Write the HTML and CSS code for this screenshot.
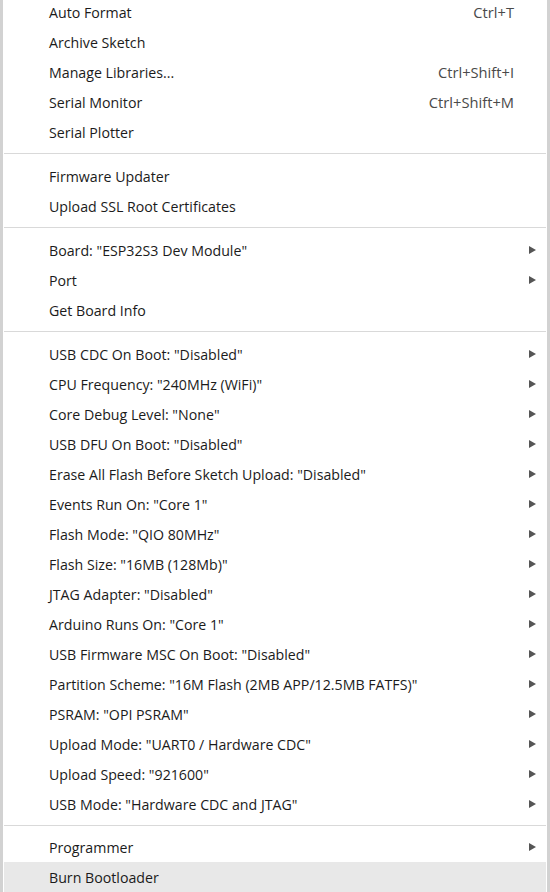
FILE: index.html
```html
<!DOCTYPE html>
<html>
<head>
<meta charset="utf-8">
<link rel="stylesheet" href="styles.css">
</head>
<body>
<div class="menu">
  <div class="item"><span class="label">Auto Format</span><span class="key">Ctrl+T</span><span class="sub"></span></div>
  <div class="item"><span class="label">Archive Sketch</span><span class="sub"></span></div>
  <div class="item"><span class="label">Manage Libraries...</span><span class="key">Ctrl+Shift+I</span><span class="sub"></span></div>
  <div class="item"><span class="label">Serial Monitor</span><span class="key">Ctrl+Shift+M</span><span class="sub"></span></div>
  <div class="item"><span class="label">Serial Plotter</span><span class="sub"></span></div>
  <div class="sep"></div>
  <div class="item"><span class="label">Firmware Updater</span><span class="sub"></span></div>
  <div class="item"><span class="label">Upload SSL Root Certificates</span><span class="sub"></span></div>
  <div class="sep"></div>
  <div class="item"><span class="label">Board: "ESP32S3 Dev Module"</span><span class="sub"><i class="arrow"></i></span></div>
  <div class="item"><span class="label">Port</span><span class="sub"><i class="arrow"></i></span></div>
  <div class="item"><span class="label">Get Board Info</span><span class="sub"></span></div>
  <div class="sep"></div>
  <div class="item"><span class="label">USB CDC On Boot: "Disabled"</span><span class="sub"><i class="arrow"></i></span></div>
  <div class="item"><span class="label">CPU Frequency: "240MHz (WiFi)"</span><span class="sub"><i class="arrow"></i></span></div>
  <div class="item"><span class="label">Core Debug Level: "None"</span><span class="sub"><i class="arrow"></i></span></div>
  <div class="item"><span class="label">USB DFU On Boot: "Disabled"</span><span class="sub"><i class="arrow"></i></span></div>
  <div class="item"><span class="label">Erase All Flash Before Sketch Upload: "Disabled"</span><span class="sub"><i class="arrow"></i></span></div>
  <div class="item"><span class="label">Events Run On: "Core 1"</span><span class="sub"><i class="arrow"></i></span></div>
  <div class="item"><span class="label">Flash Mode: "QIO 80MHz"</span><span class="sub"><i class="arrow"></i></span></div>
  <div class="item"><span class="label">Flash Size: "16MB (128Mb)"</span><span class="sub"><i class="arrow"></i></span></div>
  <div class="item"><span class="label">JTAG Adapter: "Disabled"</span><span class="sub"><i class="arrow"></i></span></div>
  <div class="item"><span class="label">Arduino Runs On: "Core 1"</span><span class="sub"><i class="arrow"></i></span></div>
  <div class="item"><span class="label">USB Firmware MSC On Boot: "Disabled"</span><span class="sub"><i class="arrow"></i></span></div>
  <div class="item"><span class="label">Partition Scheme: "16M Flash (2MB APP/12.5MB FATFS)"</span><span class="sub"><i class="arrow"></i></span></div>
  <div class="item"><span class="label">PSRAM: "OPI PSRAM"</span><span class="sub"><i class="arrow"></i></span></div>
  <div class="item"><span class="label">Upload Mode: "UART0 / Hardware CDC"</span><span class="sub"><i class="arrow"></i></span></div>
  <div class="item"><span class="label">Upload Speed: "921600"</span><span class="sub"><i class="arrow"></i></span></div>
  <div class="item"><span class="label">USB Mode: "Hardware CDC and JTAG"</span><span class="sub"><i class="arrow"></i></span></div>
  <div class="sep sep-tight"></div>
  <div class="item item-low"><span class="label">Programmer</span><span class="sub"><i class="arrow"></i></span></div>
  <div class="item item-low hover"><span class="label">Burn Bootloader</span><span class="sub"></span></div>
</div>
</body>
</html>
```

FILE: styles.css
```css
html, body {
  margin: 0;
  padding: 0;
  background: #ffffff;
  overflow: hidden;
}

.menu {
  width: 544px;
  height: 894px;
  margin-top: -2px;
  border-left: 3px solid #d2d2d2;
  border-right: 3px solid #d2d2d2;
  background: #ffffff;
  font-family: "Open Sans", "Noto Sans", sans-serif;
  font-size: 14.2px;
  color: #1b1b1b;
}

.item {
  display: flex;
  align-items: center;
  height: 30px;
  padding-left: 45px;
  padding-bottom: 2px;
  box-sizing: border-box;
  margin: 0 1px;
}

.item-low {
  padding-bottom: 0;
}

.item.hover {
  background: #e8e8e8;
}

.label {
  flex: 1;
  white-space: nowrap;
}

.key {
  color: #4a4a4a;
  font-size: 14.7px;
  white-space: nowrap;
}

.sub {
  width: 32px;
  height: 28px;
  display: flex;
  align-items: center;
  padding-left: 15px;
  box-sizing: border-box;
}

.arrow {
  display: block;
  width: 0;
  height: 0;
  margin-top: -1px;
  border-left: 7px solid #555555;
  border-top: 4px solid transparent;
  border-bottom: 4px solid transparent;
}

.sep {
  height: 14px;
  display: flex;
  flex-direction: column;
  padding-top: 5px;
  box-sizing: border-box;
  margin: 0 1px;
}

.sep::before {
  content: "";
  display: block;
  height: 1px;
  background: #d9d9d9;
}

.sep-tight {
  height: 12px;
}
```
